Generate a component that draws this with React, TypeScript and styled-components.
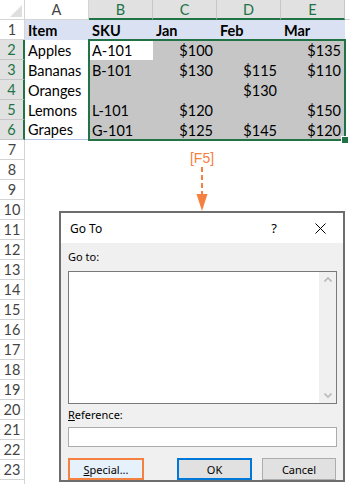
import styled, { createGlobalStyle } from "styled-components";

const GlobalStyle = createGlobalStyle`
  html, body {
    margin: 0;
    padding: 0;
    background: #ffffff;
  }
  body {
    width: 350px;
    height: 484px;
    overflow: hidden;
  }
`;

const GREEN = "#217346";
const ORANGE = "#f4813f";

const Sheet = styled.div`
  position: relative;
  width: 350px;
  height: 484px;
  overflow: hidden;
  font-family: Lato, "Liberation Sans", sans-serif;
`;

const Grid = styled.div`
  display: grid;
  grid-template-columns: 25px repeat(5, 64px) 1fr;
  grid-auto-rows: 20px;
`;

const Corner = styled.div`
  position: relative;
  background: #ffffff;
  border-right: 1px solid #d4d4d4;
  border-bottom: 1px solid #d4d4d4;
  &::after {
    content: "";
    position: absolute;
    right: 2px;
    bottom: 2px;
    border-left: 12px solid transparent;
    border-bottom: 12px solid #dfdfdf;
  }
`;

const ColHead = styled.div<{ $active?: boolean }>`
  display: flex;
  align-items: center;
  justify-content: center;
  font-size: 14.5px;
  color: ${(p) => (p.$active ? GREEN : "#444444")};
  background: ${(p) => (p.$active ? "#e1e1e1" : "#ffffff")};
  border-right: 1px solid ${(p) => (p.$active ? "#c6c6c6" : "#d4d4d4")};
  border-bottom: ${(p) => (p.$active ? `2px solid ${GREEN}` : "1px solid #d4d4d4")};
  box-sizing: border-box;
  padding-top: ${(p) => (p.$active ? "1px" : "0")};
`;

const RowHead = styled.div<{ $active?: boolean }>`
  display: flex;
  align-items: center;
  justify-content: center;
  font-size: 14.5px;
  color: ${(p) => (p.$active ? GREEN : "#444444")};
  background: ${(p) => (p.$active ? "#e1e1e1" : "#ffffff")};
  border-bottom: 1px solid ${(p) => (p.$active ? "#c6c6c6" : "#d4d4d4")};
  border-right: ${(p) => (p.$active ? `2px solid ${GREEN}` : "1px solid #d4d4d4")};
  box-sizing: border-box;
`;

const Cell = styled.div<{ $fill?: string; $right?: boolean; $bold?: boolean; $line?: boolean }>`
  display: flex;
  align-items: center;
  justify-content: ${(p) => (p.$right ? "flex-end" : "flex-start")};
  padding: 0 4px 0 3px;
  font-size: 14.5px;
  font-weight: ${(p) => (p.$bold ? 700 : 400)};
  color: #000000;
  background: ${(p) => p.$fill || "#ffffff"};
  border-bottom: ${(p) => (p.$line ? "1px solid #b4c6e7" : "none")};
  box-sizing: border-box;
  white-space: nowrap;
`;

const Selection = styled.div`
  position: absolute;
  left: 88px;
  top: 39px;
  width: 258px;
  height: 102px;
  border: 2px solid ${GREEN};
  box-sizing: border-box;
  pointer-events: none;
  &::after {
    content: "";
    position: absolute;
    right: -5px;
    bottom: -5px;
    width: 6px;
    height: 6px;
    background: ${GREEN};
    border: 1px solid #ffffff;
  }
`;

const KeyHint = styled.div`
  position: absolute;
  left: 184px;
  top: 150px;
  width: 36px;
  display: flex;
  flex-direction: column;
  align-items: center;
  color: ${ORANGE};
  font-family: "Liberation Sans", Arial, sans-serif;
  font-size: 14px;
`;

const Dialog = styled.div`
  position: absolute;
  left: 59px;
  top: 211px;
  width: 286px;
  height: 271px;
  border: 2px solid #6d6d6d;
  box-sizing: border-box;
  display: flex;
  flex-direction: column;
  font-family: "Segoe UI", "Noto Sans", sans-serif;
  font-size: 11px;
  color: #000000;
  background: #f0f0f0;
`;

const TitleBar = styled.div`
  height: 30px;
  flex-shrink: 0;
  display: flex;
  align-items: center;
  background: #ffffff;
  padding-left: 9px;
  font-size: 12px;
`;

const Title = styled.div`
  flex: 1;
`;

const TitleButton = styled.div`
  width: 46px;
  display: flex;
  justify-content: center;
  align-items: center;
  font-size: 13px;
`;

const Body = styled.div`
  flex: 1;
  display: flex;
  flex-direction: column;
  padding: 6px 6px 0 7px;
`;

const Label = styled.div<{ $gap?: number }>`
  height: 16px;
  line-height: 16px;
  margin-top: ${(p) => p.$gap || 0}px;
  u {
    text-decoration: underline;
  }
`;

const ListBox = styled.div`
  margin-top: 6px;
  height: 133px;
  border: 1px solid #7a7a7a;
  box-sizing: border-box;
  background: #ffffff;
  display: flex;
  justify-content: flex-end;
`;

const ScrollBar = styled.div`
  width: 17px;
  background: #f0f0f0;
  display: flex;
  flex-direction: column;
  justify-content: space-between;
  align-items: center;
  padding: 5px 0;
`;

const Input = styled.div`
  margin-top: 4px;
  height: 20px;
  border: 1px solid #ababab;
  box-sizing: border-box;
  background: #ffffff;
`;

const Buttons = styled.div`
  margin-top: 11px;
  display: flex;
  justify-content: space-between;
  padding-right: 1px;
`;

const ButtonGroup = styled.div`
  display: flex;
  gap: 10px;
`;

const Button = styled.div<{ $ring?: string; $bg?: string; $width: number }>`
  width: ${(p) => p.$width}px;
  height: 22px;
  box-sizing: border-box;
  display: flex;
  align-items: center;
  justify-content: center;
  background: ${(p) => p.$bg || "#e1e1e1"};
  border: ${(p) => (p.$ring ? `2px solid ${p.$ring}` : "1px solid #adadad")};
`;

const rows: string[][] = [
  ["Apples", "A-101", "$100", "", "$135"],
  ["Bananas", "B-101", "$130", "$115", "$110"],
  ["Oranges", "", "", "$130", ""],
  ["Lemons", "L-101", "$120", "", "$150"],
  ["Grapes", "G-101", "$125", "$145", "$120"],
];

const headers = ["Item", "SKU", "Jan", "Feb", "Mar"];
const letters = ["A", "B", "C", "D", "E"];

function Chevron({ up }: { up?: boolean }) {
  return (
    <svg width="8" height="5" viewBox="0 0 8 5">
      <path
        d={up ? "M0.5 4.5 L4 1 L7.5 4.5" : "M0.5 0.5 L4 4 L7.5 0.5"}
        fill="none"
        stroke="#b9b9b9"
        strokeWidth="1.6"
      />
    </svg>
  );
}

function App() {
  // rows 7..23 get numbers; the row cut by the window edge shows none
  const emptyRows = Array.from({ length: 18 }, (_, i) => i + 7);
  return (
    <Sheet>
      <GlobalStyle />
      <Grid>
        <Corner />
        {letters.map((l, i) => (
          <ColHead key={l} $active={i > 0}>
            {l}
          </ColHead>
        ))}
        <ColHead />

        <RowHead>1</RowHead>
        {headers.map((h) => (
          <Cell key={h} $fill="#d9e1f2" $bold>
            {h}
          </Cell>
        ))}
        <Cell />

        {rows.map((r, ri) => [
          <RowHead key={"h" + ri} $active>
            {ri + 2}
          </RowHead>,
          ...r.map((v, ci) => (
            <Cell
              key={ri + "-" + ci}
              $fill={ci === 0 || (ci === 1 && ri === 0) ? "#ffffff" : "#c6c6c6"}
              $right={ci > 1}
              $line={ci === 0 && ri === 4}
            >
              {v}
            </Cell>
          )),
          <Cell key={"e" + ri} />,
        ])}

        {emptyRows.map((n) => [
          <RowHead key={"r" + n}>{n < 24 ? n : ""}</RowHead>,
          ...letters.map((l) => <Cell key={l + n} />),
          <Cell key={"x" + n} />,
        ])}
      </Grid>

      <Selection />

      <KeyHint>
        <span>[F5]</span>
        <svg width="14" height="46" viewBox="0 0 14 46">
          <line x1="7" y1="1" x2="7" y2="30" stroke={ORANGE} strokeWidth="2" strokeDasharray="5 3" />
          <path d="M1.5 28 L12.5 28 L7 45 Z" fill={ORANGE} />
        </svg>
      </KeyHint>

      <Dialog>
        <TitleBar>
          <Title>Go To</Title>
          <TitleButton>?</TitleButton>
          <TitleButton>
            <svg width="11" height="11" viewBox="0 0 11 11">
              <path d="M0.5 0.5 L10.5 10.5 M10.5 0.5 L0.5 10.5" stroke="#000" strokeWidth="1" />
            </svg>
          </TitleButton>
        </TitleBar>
        <Body>
          <Label>Go to:</Label>
          <ListBox>
            <ScrollBar>
              <Chevron up />
              <Chevron />
            </ScrollBar>
          </ListBox>
          <Label $gap={3}>
            <u>R</u>eference:
          </Label>
          <Input />
          <Buttons>
            <Button $width={76} $ring={ORANGE} $bg="#e5f1fb">
              <span>
                <u>S</u>pecial...
              </span>
            </Button>
            <ButtonGroup>
              <Button $width={75} $ring="#0078d7">
                OK
              </Button>
              <Button $width={74}>Cancel</Button>
            </ButtonGroup>
          </Buttons>
        </Body>
      </Dialog>
    </Sheet>
  );
}

export default App;
